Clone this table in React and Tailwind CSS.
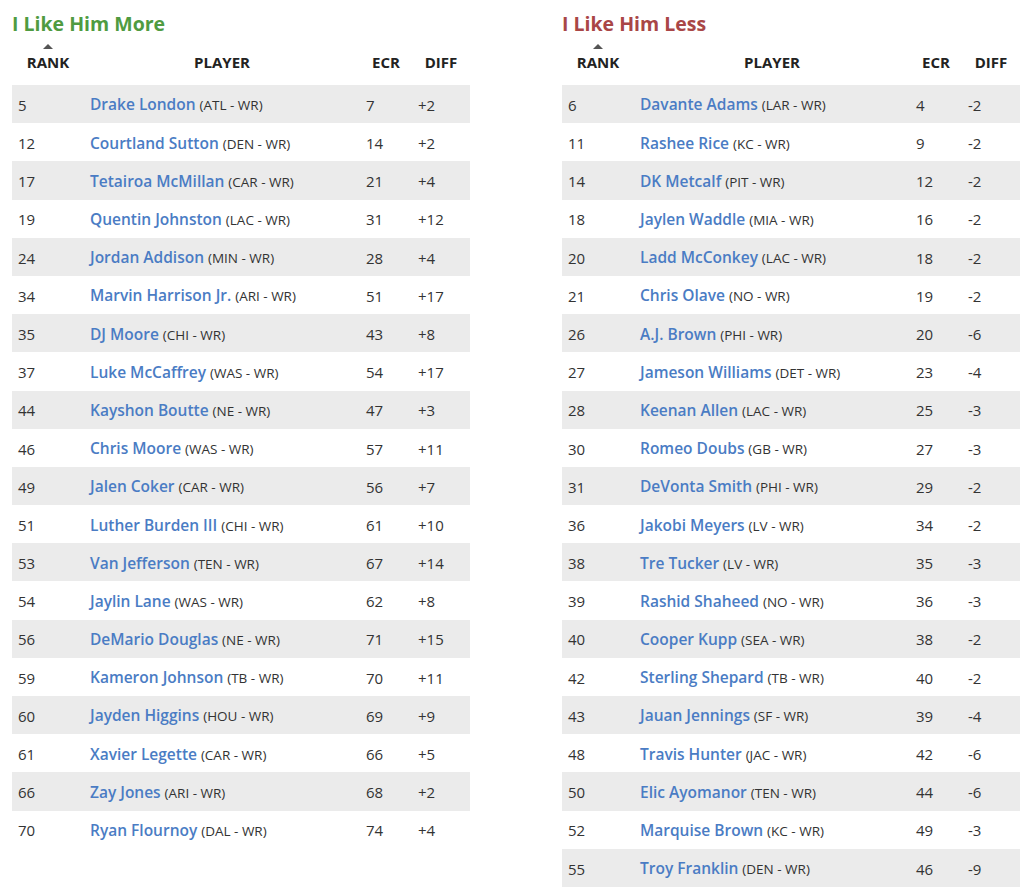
const more = [
  [5, 'Drake London', 'ATL', 7, '+2'],
  [12, 'Courtland Sutton', 'DEN', 14, '+2'],
  [17, 'Tetairoa McMillan', 'CAR', 21, '+4'],
  [19, 'Quentin Johnston', 'LAC', 31, '+12'],
  [24, 'Jordan Addison', 'MIN', 28, '+4'],
  [34, 'Marvin Harrison Jr.', 'ARI', 51, '+17'],
  [35, 'DJ Moore', 'CHI', 43, '+8'],
  [37, 'Luke McCaffrey', 'WAS', 54, '+17'],
  [44, 'Kayshon Boutte', 'NE', 47, '+3'],
  [46, 'Chris Moore', 'WAS', 57, '+11'],
  [49, 'Jalen Coker', 'CAR', 56, '+7'],
  [51, 'Luther Burden III', 'CHI', 61, '+10'],
  [53, 'Van Jefferson', 'TEN', 67, '+14'],
  [54, 'Jaylin Lane', 'WAS', 62, '+8'],
  [56, 'DeMario Douglas', 'NE', 71, '+15'],
  [59, 'Kameron Johnson', 'TB', 70, '+11'],
  [60, 'Jayden Higgins', 'HOU', 69, '+9'],
  [61, 'Xavier Legette', 'CAR', 66, '+5'],
  [66, 'Zay Jones', 'ARI', 68, '+2'],
  [70, 'Ryan Flournoy', 'DAL', 74, '+4'],
];

const less = [
  [6, 'Davante Adams', 'LAR', 4, '-2'],
  [11, 'Rashee Rice', 'KC', 9, '-2'],
  [14, 'DK Metcalf', 'PIT', 12, '-2'],
  [18, 'Jaylen Waddle', 'MIA', 16, '-2'],
  [20, 'Ladd McConkey', 'LAC', 18, '-2'],
  [21, 'Chris Olave', 'NO', 19, '-2'],
  [26, 'A.J. Brown', 'PHI', 20, '-6'],
  [27, 'Jameson Williams', 'DET', 23, '-4'],
  [28, 'Keenan Allen', 'LAC', 25, '-3'],
  [30, 'Romeo Doubs', 'GB', 27, '-3'],
  [31, 'DeVonta Smith', 'PHI', 29, '-2'],
  [36, 'Jakobi Meyers', 'LV', 34, '-2'],
  [38, 'Tre Tucker', 'LV', 35, '-3'],
  [39, 'Rashid Shaheed', 'NO', 36, '-3'],
  [40, 'Cooper Kupp', 'SEA', 38, '-2'],
  [42, 'Sterling Shepard', 'TB', 40, '-2'],
  [43, 'Jauan Jennings', 'SF', 39, '-4'],
  [48, 'Travis Hunter', 'JAC', 42, '-6'],
  [50, 'Elic Ayomanor', 'TEN', 44, '-6'],
  [52, 'Marquise Brown', 'KC', 49, '-3'],
  [55, 'Troy Franklin', 'DEN', 46, '-9'],
];

const cols = 'grid grid-cols-[72px_276px_52px_58px]';

const RankTable = ({ title, titleColor, rows }) => {
  return (
    <div className="w-[458px]">
      <h2 className={`text-[19.5px] font-bold leading-[26px] pt-[11px] ${titleColor}`}>
        {title}
      </h2>

      {/* Header */}
      <div className={`${cols} h-[48px] items-end pb-[14px] text-[15px] font-bold text-[#222]`}>
        <div className="flex flex-col items-center">
          <span className="w-0 h-0 border-l-[5px] border-r-[5px] border-b-[5px] border-l-transparent border-r-transparent border-b-[#555] mb-[4px]" />
          <span className="leading-[18px]">RANK</span>
        </div>
        <div className="text-center leading-[18px]">PLAYER</div>
        <div className="text-center leading-[18px]">ECR</div>
        <div className="text-center leading-[18px]">DIFF</div>
      </div>

      {/* Rows */}
      {rows.map(([rank, name, team, ecr, diff], i) => (
        <div
          key={name}
          className={`${cols} h-[38.2px] items-center pt-[2px] text-[15px] text-[#333] ${
            i % 2 === 0 ? 'bg-[#ebebeb]' : 'bg-white'
          }`}
        >
          <div className="pl-[6px]">{rank}</div>
          <div className="pl-[6px] whitespace-nowrap">
            <span className="text-[15.5px] font-semibold text-[#4a7cc4]">{name}</span>{' '}
            <span className="text-[13.5px] text-[#333]">({team} - WR)</span>
          </div>
          <div className="pl-[6px]">{ecr}</div>
          <div className="pl-[6px]">{diff}</div>
        </div>
      ))}
    </div>
  );
};

export default function App() {
  return (
    <div className="w-[1024px] h-[890px] bg-white font-['Open_Sans',sans-serif] overflow-hidden">
      <div className="flex gap-[92px] pl-[12px]">
        <RankTable title="I Like Him More" titleColor="text-[#4f9b41]" rows={more} />
        <RankTable title="I Like Him Less" titleColor="text-[#a94646]" rows={less} />
      </div>
    </div>
  );
}
